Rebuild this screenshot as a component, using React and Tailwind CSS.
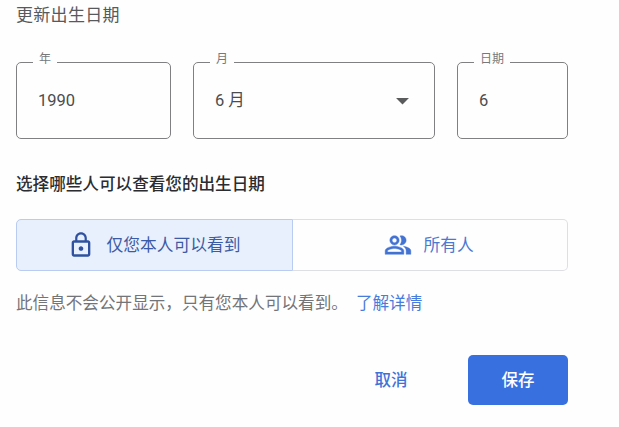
import React, { useState } from 'react';
import { MdArrowDropDown, MdLockOutline } from 'react-icons/md';

const PeopleIcon = ({ className }) => (
  <svg viewBox="0 0 24 24" width="28" height="28" fill="currentColor" stroke="currentColor" strokeWidth="0.35" className={className}>
    <path d="M9 12c2.21 0 4-1.79 4-4s-1.79-4-4-4-4 1.79-4 4 1.79 4 4 4zm0-6c1.1 0 2 .9 2 2s-.9 2-2 2-2-.9-2-2 .9-2 2-2z" />
    <path d="M9 13c-2.67 0-8 1.34-8 4v3h16v-3c0-2.66-5.33-4-8-4zm6 5H3v-.99C3.2 16.29 6.3 15 9 15s5.8 1.29 6 2v1z" />
    <path d="M16.67 13.13C18.04 14.06 19 15.32 19 17v3h4v-3c0-2.18-3.57-3.47-6.33-3.87z" />
    <path d="M15 12c2.21 0 4-1.79 4-4s-1.79-4-4-4c-.47 0-.91.1-1.33.24C14.5 5.27 15 6.58 15 8s-.5 2.73-1.33 3.76c.42.14.86.24 1.33.24z" />
  </svg>
);

const Field = ({ label, value, className, children }) => (
  <fieldset className={`h-[84px] min-w-0 rounded-[5px] border-[1.5px] border-[#808082] pl-[16px] ${className}`}>
    <legend className="h-[15px] px-[6px] pb-[6px] text-[12px] leading-[9px] text-[#77787b]">
      {label}
    </legend>
    <div className="flex h-[62px] items-center justify-between pl-[5px] text-[16.5px] text-[#4b4c4f]">
      <span>{value}</span>
      {children}
    </div>
  </fieldset>
);

const App = () => {
  const [visibility, setVisibility] = useState('private');

  return (
    <div className="h-[427px] w-[619px] overflow-hidden bg-[#fefefe] pl-[16px] font-[Roboto,'Noto_Sans_CJK_SC',sans-serif]">
      <h1 className="h-[55px] pt-[3px] text-[17px] leading-6 tracking-[0.3px] text-[#58595c]">更新出生日期</h1>

      {/* Birthday fields */}
      <div className="flex w-[552px] justify-between">
        <Field label="年" value="1990" className="w-[155px]" />
        <Field label="月" value="6 月" className="w-[242px]">
          <MdArrowDropDown size={31} className="mr-[16px] mb-[2px] text-[#5a5b5d]" />
        </Field>
        <Field label="日期" value="6" className="w-[111px]" />
      </div>

      <h2 className="mt-[34px] text-[16.6px] leading-6 font-medium text-[#2b2c2f]">选择哪些人可以查看您的出生日期</h2>

      {/* Who can see it */}
      <div className="mt-[22px] flex h-[52px] w-[552px] text-[16.75px]">
        <button
          onClick={() => setVisibility('private')}
          aria-pressed={visibility === 'private'}
          className="flex w-[277px] cursor-pointer items-center rounded-l-[5px] border-[1.5px] border-[#b9cbf0] bg-[#e8f0fd] pl-[50px] text-[#3b5ba5]"
        >
          <MdLockOutline size={28} className="mr-[11.5px] shrink-0 text-[#2f519f]" />
          <span className="pt-[2px]">仅您本人可以看到</span>
        </button>
        <button
          onClick={() => setVisibility('public')}
          aria-pressed={visibility === 'public'}
          className="flex flex-1 cursor-pointer items-center rounded-r-[5px] border-[1.5px] border-l-0 border-[#dedfe3] pl-[91px] text-[#4a78d2]"
        >
          <PeopleIcon className="mr-[11.5px] shrink-0 text-[#4272d2]" />
          <span className="pt-[2px]">所有人</span>
        </button>
      </div>

      <p className="mt-[21px] flex text-[16.6px] leading-6 text-[#737477]">
        <span>此信息不会公开显示，只有您本人可以看到。</span>
        <a href="#" className="ml-[8px] text-[#477bdc]">了解详情</a>
      </p>

      {/* Actions */}
      <div className="mt-[39px] flex h-[50px] w-[552px] justify-end text-[16.5px] font-medium">
        <button className="mr-[44px] w-[66px] cursor-pointer pt-[2px] text-[#3f72d8]">取消</button>
        <button className="w-[100px] cursor-pointer rounded-[5px] bg-[#3870df] pt-[2px] text-white">保存</button>
      </div>
    </div>
  );
};

export default App;
